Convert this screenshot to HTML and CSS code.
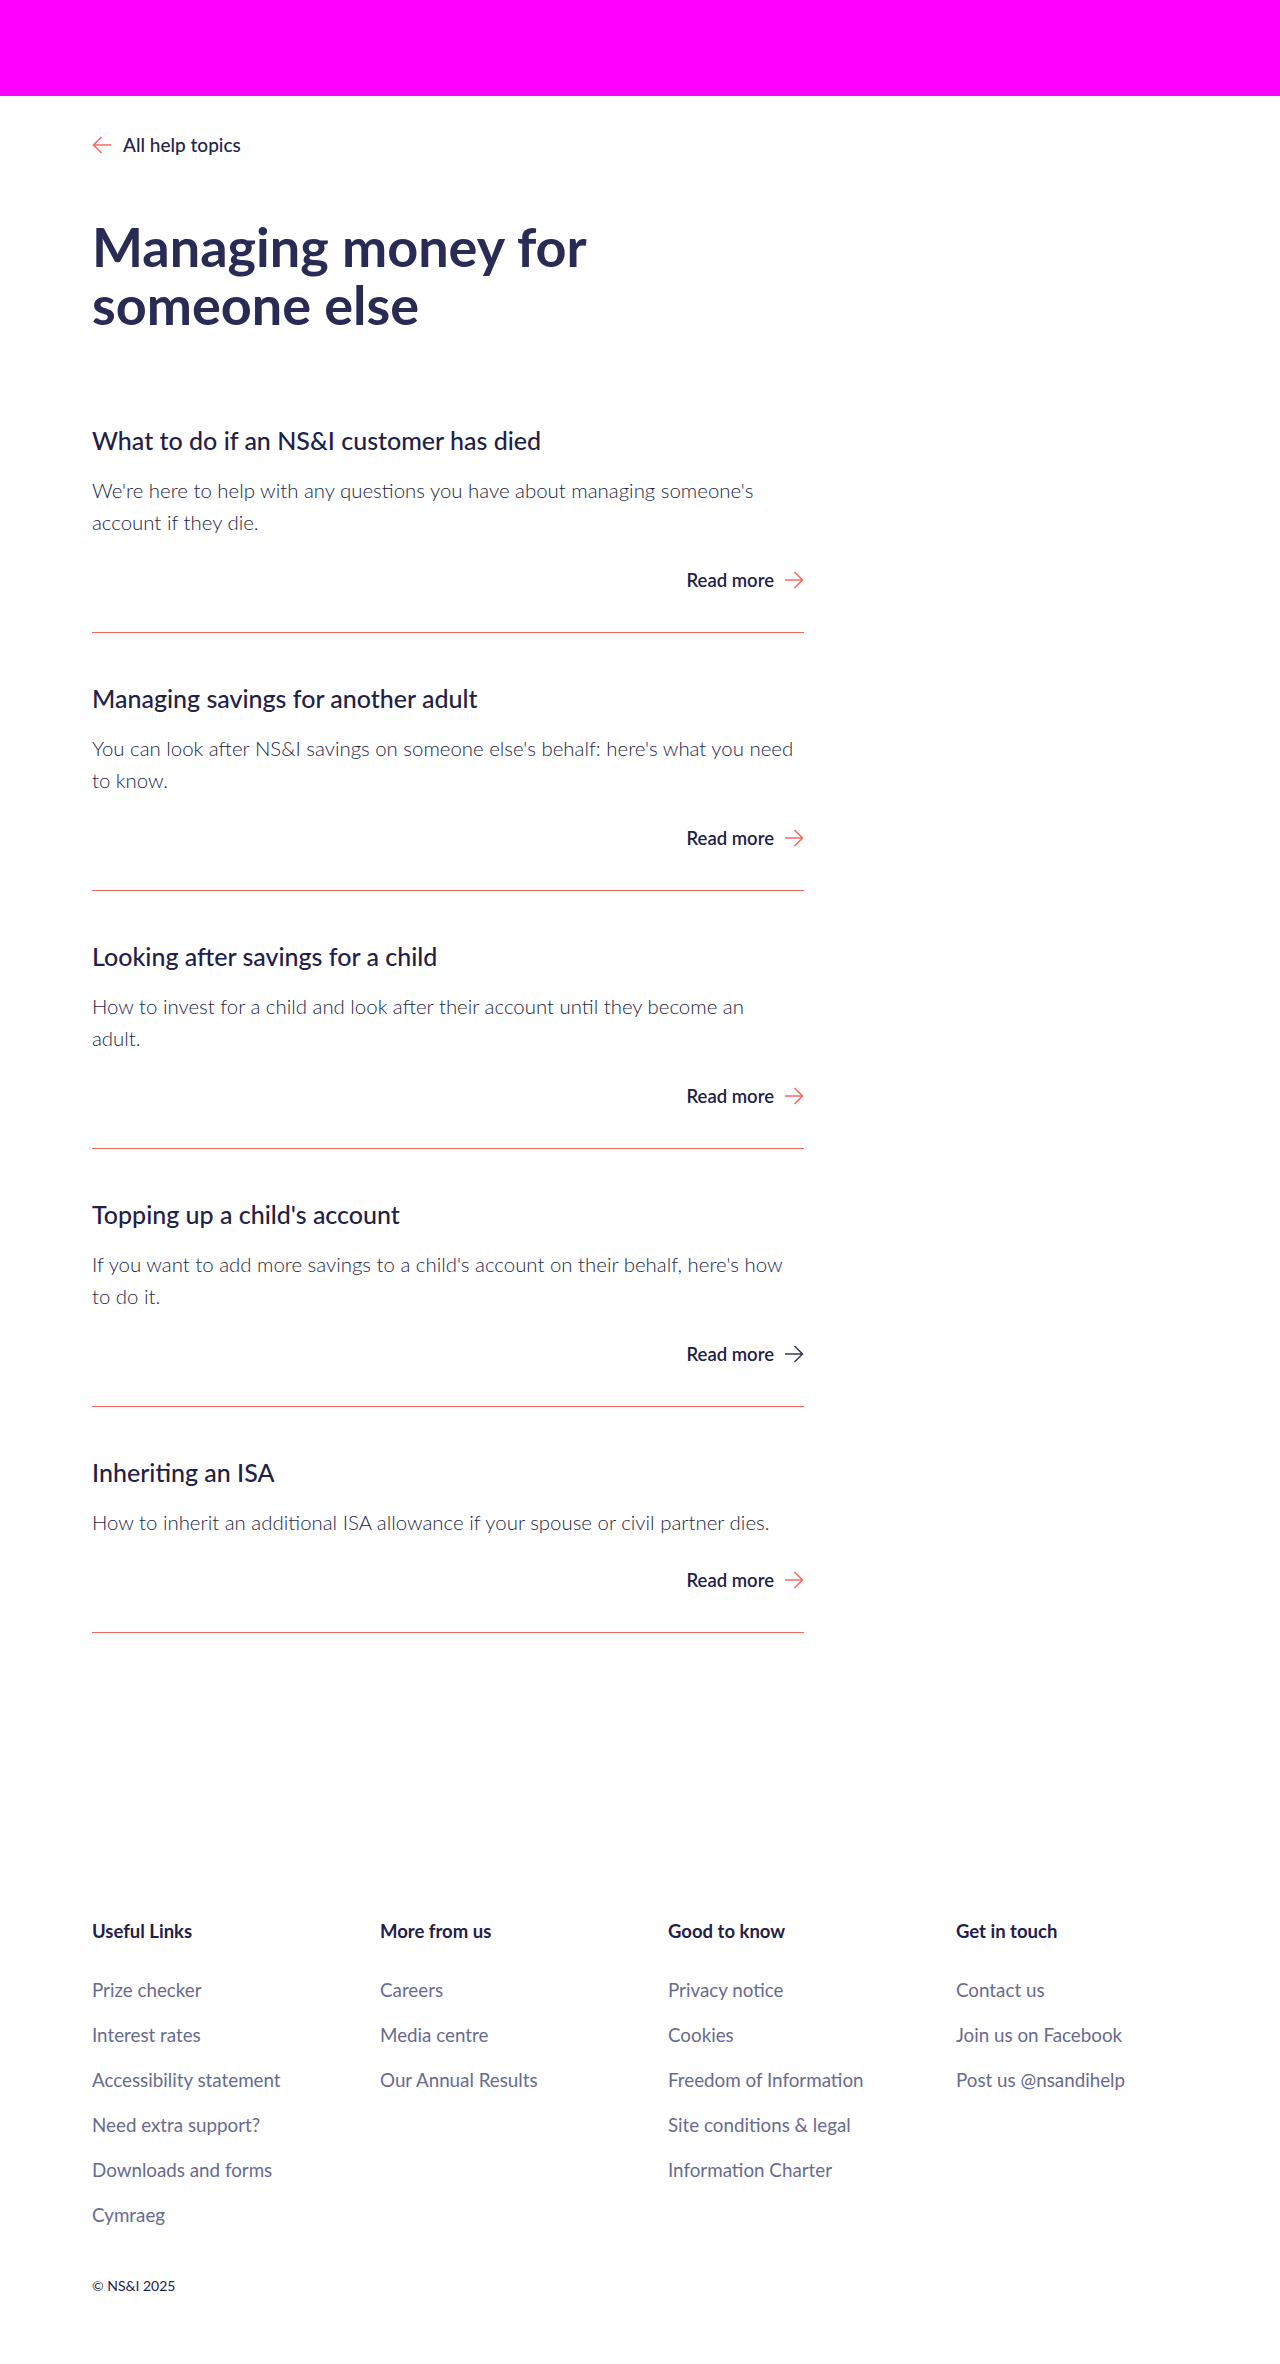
FILE: index.html
```html
<!DOCTYPE html>
<html lang="en">
<head>
<meta charset="utf-8">
<title>Managing money for someone else | NS&amp;I</title>
<link rel="stylesheet" href="styles.css">
</head>
<body>
<header class="topbar"></header>

<main class="page">
  <a class="back-link" href="#">
    <svg class="back-icon" width="20" height="18" viewBox="0 0 20 18" aria-hidden="true"><path d="M19 9H1.5M9.5 1L1.5 9l8 8" fill="none" stroke="currentColor" stroke-width="1.6"/></svg>
    <span>All help topics</span>
  </a>

  <h1 class="page-title">Managing money for someone else</h1>

  <ul class="topics">
    <li class="topic">
      <h2 class="topic-title">What to do if an NS&amp;I customer has died</h2>
      <p class="topic-desc">We're here to help with any questions you have about managing someone's account if they die.</p>
      <div class="topic-actions"><a class="read-more" href="#">Read more <svg class="arrow" width="20" height="18" viewBox="0 0 20 18" aria-hidden="true"><path d="M1 9h17.5M10.5 1l8 8-8 8" fill="none" stroke="currentColor" stroke-width="1.6"/></svg></a></div>
    </li>
    <li class="topic">
      <h2 class="topic-title">Managing savings for another adult</h2>
      <p class="topic-desc">You can look after NS&amp;I savings on someone else's behalf: here's what you need to know.</p>
      <div class="topic-actions"><a class="read-more" href="#">Read more <svg class="arrow" width="20" height="18" viewBox="0 0 20 18" aria-hidden="true"><path d="M1 9h17.5M10.5 1l8 8-8 8" fill="none" stroke="currentColor" stroke-width="1.6"/></svg></a></div>
    </li>
    <li class="topic">
      <h2 class="topic-title">Looking after savings for a child</h2>
      <p class="topic-desc">How to invest for a child and look after their account until they become an<br>adult.</p>
      <div class="topic-actions"><a class="read-more" href="#">Read more <svg class="arrow" width="20" height="18" viewBox="0 0 20 18" aria-hidden="true"><path d="M1 9h17.5M10.5 1l8 8-8 8" fill="none" stroke="currentColor" stroke-width="1.6"/></svg></a></div>
    </li>
    <li class="topic">
      <h2 class="topic-title">Topping up a child's account</h2>
      <p class="topic-desc">If you want to add more savings to a child's account on their behalf, here's how to do it.</p>
      <div class="topic-actions"><a class="read-more is-hover" href="#">Read more <svg class="arrow" width="20" height="18" viewBox="0 0 20 18" aria-hidden="true"><path d="M1 9h17.5M10.5 1l8 8-8 8" fill="none" stroke="currentColor" stroke-width="1.6"/></svg></a></div>
    </li>
    <li class="topic">
      <h2 class="topic-title">Inheriting an ISA</h2>
      <p class="topic-desc">How to inherit an additional ISA allowance if your spouse or civil partner dies.</p>
      <div class="topic-actions"><a class="read-more" href="#">Read more <svg class="arrow" width="20" height="18" viewBox="0 0 20 18" aria-hidden="true"><path d="M1 9h17.5M10.5 1l8 8-8 8" fill="none" stroke="currentColor" stroke-width="1.6"/></svg></a></div>
    </li>
  </ul>
</main>

<footer class="site-footer">
  <div class="footer-grid">
    <div class="footer-col">
      <h3 class="footer-heading">Useful Links</h3>
      <ul class="footer-links">
        <li><a href="#">Prize checker</a></li>
        <li><a href="#">Interest rates</a></li>
        <li><a href="#">Accessibility statement</a></li>
        <li><a href="#">Need extra support?</a></li>
        <li><a href="#">Downloads and forms</a></li>
        <li><a href="#">Cymraeg</a></li>
      </ul>
    </div>
    <div class="footer-col">
      <h3 class="footer-heading">More from us</h3>
      <ul class="footer-links">
        <li><a href="#">Careers</a></li>
        <li><a href="#">Media centre</a></li>
        <li><a href="#">Our Annual Results</a></li>
      </ul>
    </div>
    <div class="footer-col">
      <h3 class="footer-heading">Good to know</h3>
      <ul class="footer-links">
        <li><a href="#">Privacy notice</a></li>
        <li><a href="#">Cookies</a></li>
        <li><a href="#">Freedom of Information</a></li>
        <li><a href="#">Site conditions &amp; legal</a></li>
        <li><a href="#">Information Charter</a></li>
      </ul>
    </div>
    <div class="footer-col">
      <h3 class="footer-heading">Get in touch</h3>
      <ul class="footer-links">
        <li><a href="#">Contact us</a></li>
        <li><a href="#">Join us on Facebook</a></li>
        <li><a href="#">Post us @nsandihelp</a></li>
      </ul>
    </div>
  </div>
  <p class="copyright">© NS&amp;I 2025</p>
</footer>
</body>
</html>
```

FILE: styles.css
```css
* { box-sizing: border-box; }

html, body {
  margin: 0;
  padding: 0;
  background: #ffffff;
}

body {
  font-family: Lato, "Liberation Sans", sans-serif;
  color: #272a52;
}

a { text-decoration: none; color: inherit; }

.topbar {
  height: 96px;
  background: #ff00ff;
}

.page {
  padding: 37px 92px 0;
}

.back-link {
  display: inline-flex;
  align-items: center;
  gap: 11px;
  font-size: 19px;
  line-height: 24px;
  font-weight: 500;
  color: #22254d;
}

.back-icon {
  color: #f96a62;
  display: block;
}

.page-title {
  margin: 61px 0 0;
  max-width: 500px;
  font-size: 54px;
  line-height: 58px;
  font-weight: 700;
  color: #292b54;
}

.topics {
  list-style: none;
  margin: 41px 0 0;
  padding: 0;
  width: 712px;
}

.topic {
  padding: 50px 0 40px;
  border-bottom: 1px solid #f3665e;
}

.topic-title {
  margin: 0;
  font-size: 25px;
  line-height: 30px;
  font-weight: 500;
  color: #1f2148;
}

.topic-desc {
  margin: 19px 0 0;
  font-size: 20.4px;
  line-height: 32px;
  font-weight: 300;
  color: #1c1e46;
}

.topic-actions {
  display: flex;
  justify-content: flex-end;
  margin-top: 30px;
}

.read-more {
  display: inline-flex;
  align-items: center;
  gap: 10px;
  font-size: 18.5px;
  line-height: 24px;
  font-weight: 600;
  color: #1f2148;
}

.read-more .arrow {
  display: block;
  color: #f96a62;
}

.read-more.is-hover .arrow {
  color: #3a3c5e;
}

.site-footer {
  padding: 286px 92px 63px;
}

.footer-grid {
  display: grid;
  grid-template-columns: repeat(4, 288px);
}

.footer-heading {
  margin: 0;
  font-size: 18.5px;
  line-height: 24px;
  font-weight: 700;
  color: #1f2148;
}

.footer-links {
  list-style: none;
  margin: 35px 0 0;
  padding: 0;
  display: flex;
  flex-direction: column;
  gap: 21px;
}

.footer-links a {
  display: block;
  font-size: 18.8px;
  line-height: 24px;
  font-weight: 400;
  color: #686b8d;
}

.copyright {
  margin: 49px 0 0;
  font-size: 14px;
  line-height: 20px;
  font-weight: 400;
  color: #1f2148;
}
```
